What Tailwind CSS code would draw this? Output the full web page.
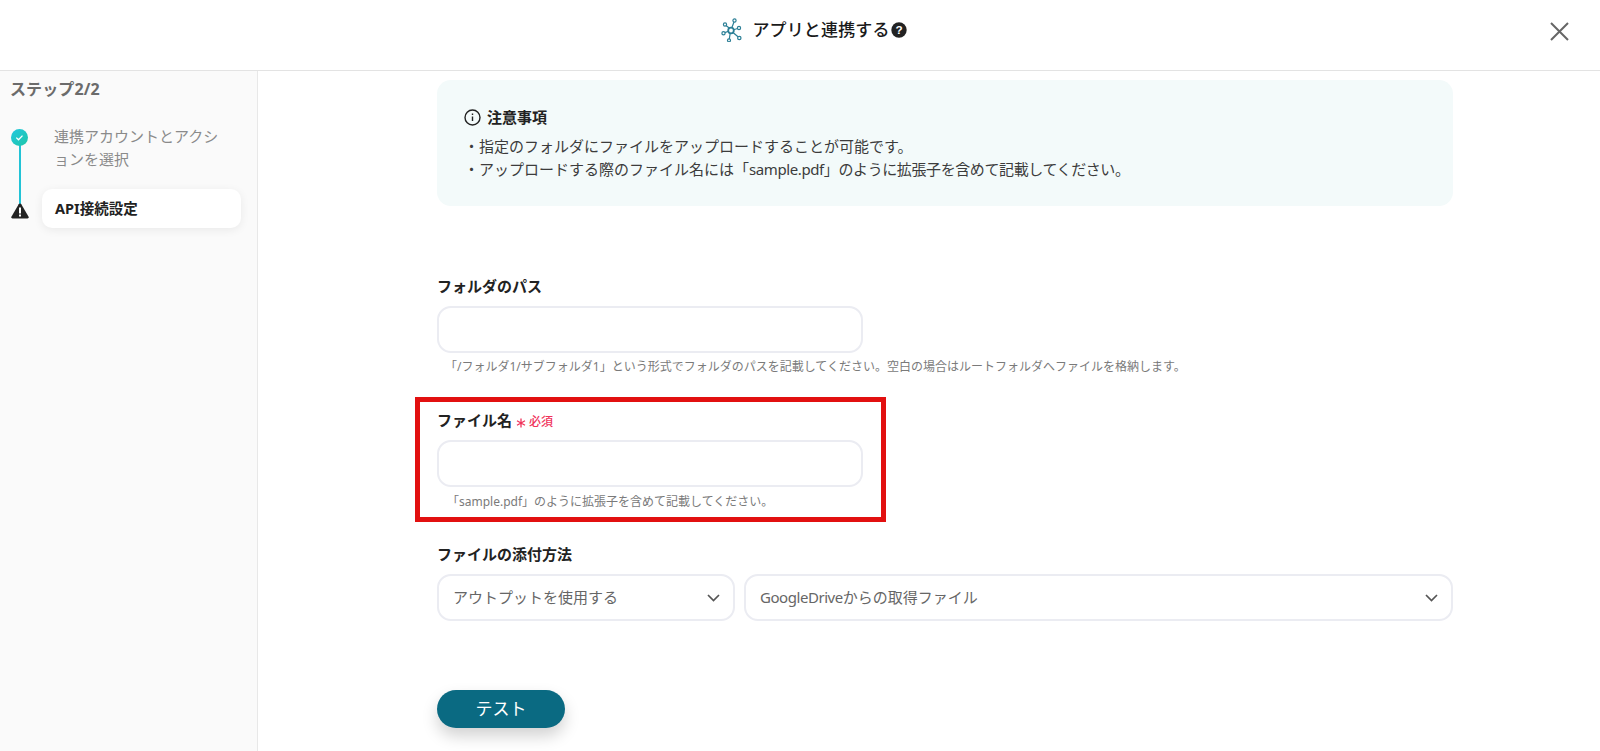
<!DOCTYPE html>
<html lang="ja">
<head>
<meta charset="utf-8">
<script src="https://cdn.jsdelivr.net/npm/@tailwindcss/browser@4"></script>
</head>
<body class="bg-white overflow-hidden font-['Noto_Sans','Noto_Sans_CJK_JP',sans-serif]">
<div class="h-[751px] w-[1600px] flex flex-col overflow-hidden">
  <header class="h-[71px] shrink-0 border-b border-[#e3e3e3] flex items-center justify-center relative">
    <div class="flex items-center ml-[27px] mt-[-10px]">
      <svg class="w-[22px] h-[24px] mr-[10px]" viewBox="0 0 22 24" fill="none" stroke="#2c7f96" stroke-width="1.2">
        <circle cx="11" cy="12.500" r="2.800" stroke-width="1.800"/>
        <path d="M9.500 10.200 6 7.500M11.800 9.800 14 4M13.700 11.800l3.800-1.300M13 14.500l5 4.300M10.200 15.200 9.300 21M8.300 13.300 5 14.600"/>
        <circle cx="5" cy="6.500" r="1.600"/><circle cx="14.500" cy="2.500" r="1.600"/><circle cx="19" cy="10" r="1.600"/><circle cx="19.300" cy="20" r="1.700"/><circle cx="9" cy="22.300" r="1.500"/><circle cx="3.500" cy="15.200" r="1.600"/>
      </svg>
      <span class="text-[17px] tracking-[0.15px] font-medium text-[#1a1a1a] leading-6">アプリと連携する</span>
      <svg class="w-[16px] h-[16px] ml-[1px]" viewBox="0 0 15 15"><circle cx="7.5" cy="7.5" r="7.200" fill="#222"/><text x="7.5" y="11.3" text-anchor="middle" font-size="11" font-weight="700" fill="#fff" font-family="Liberation Sans">?</text></svg>
    </div>
    <svg class="absolute left-[1550px] top-[22px] w-[19px] h-[19px]" viewBox="0 0 19 19" stroke="#666" stroke-width="2" fill="none"><path d="M1 1l17 17M18 1 1 18"/></svg>
  </header>
  <div class="flex flex-1 min-h-0">
    <aside class="w-[258px] shrink-0 bg-[#fafafa] border-r border-[#e8e8e8] pl-[11px] pt-[6px]">
      <div class="text-[16px] tracking-[0.1px] font-bold text-[#6b6b6b] leading-6 ml-[-1px]">ステップ2/2</div>
      <div class="relative mt-[27px]">
        <div class="absolute left-[8px] top-[10px] w-[2px] h-[67px] bg-[#22c3d6]"></div>
        <div class="flex">
          <svg class="w-[17px] h-[17px] mt-[1px] relative shrink-0" viewBox="0 0 17 17"><defs><linearGradient id="g" x1="0" y1="0" x2="1" y2="1"><stop offset="0" stop-color="#22c8df"/><stop offset="1" stop-color="#1fc6a8"/></linearGradient></defs><circle cx="8.5" cy="8.5" r="8.5" fill="url(#g)"/><path d="M5.3 8.6l2.2 2.2 4-4.2" stroke="#fff" stroke-width="1.3" fill="none"/></svg>
          <div class="ml-[26px] w-[180px] text-[15px] leading-[23px] text-[#8a8a8a] mt-[-3px]">連携アカウントとアクシ<br>ョンを選択</div>
        </div>
        <div class="flex items-center mt-[18px]">
          <svg class="w-[18px] h-[16px] relative shrink-0 mt-[5px]" viewBox="0 0 18 16"><path d="M9 .5c.6 0 1 .3 1.3.8l7.3 12.4c.5.9-.1 1.8-1.100 1.800H1.500c-1 0-1.600-.9-1.100-1.800L7.700 1.300C8 .8 8.400.5 9 .5z" fill="#222"/><rect x="8" y="4.500" width="2" height="6" fill="#fff"/><rect x="8" y="11.500" width="2" height="2" fill="#fff"/></svg>
          <div class="ml-[13px] w-[199px] h-[39px] bg-white rounded-[10px] shadow-[0_2px_10px_rgba(0,0,0,0.07)] flex items-center pl-[13px] text-[14.500px] font-bold text-[#222]">API接続設定</div>
        </div>
      </div>
    </aside>
    <main class="flex-1 pl-[179px] pt-[9px]">
      <div class="w-[1016px] relative">
        <section class="h-[126px] rounded-[14px] bg-[#f3fafa] pl-[27px] pt-[25px]">
          <div class="flex items-center text-[15px] font-bold text-[#222] leading-6">
            <svg class="w-[17px] h-[17px] mr-[6px]" viewBox="0 0 17 17" fill="none" stroke="#222" stroke-width="1.4"><circle cx="8.500" cy="8.500" r="7.500"/><path d="M8.500 7.500v4.500M8.500 4.500v1.500"/></svg>
            注意事項
          </div>
          <div class="text-[15px] leading-[23px] text-[#3c3c3c] mt-[6px]">
            <p>・指定のフォルダにファイルをアップロードすることが可能です。</p>
            <p>・アップロードする際のファイル名には「<span class="tracking-[-0.4px]">sample.pdf」のように拡張子を含めて記載してください。</span></p>
          </div>
        </section>
        <label class="block mt-[68px] text-[15px] font-bold text-[#222] leading-6">フォルダのパス</label>
        <input class="block mt-[8px] w-[426px] h-[47px] rounded-[14px] border-2 border-[#ebecf2] bg-white">
        <p class="mt-[4px] ml-[8px] text-[12px] leading-5 text-[#7a7a7a]">「/フォルダ1/サブフォルダ1」という形式でフォルダのパスを記載してください。空白の場合はルートフォルダへファイルを格納します。</p>
        <div class="flex items-center h-6 mt-[31px]">
          <label class="text-[15px] font-bold text-[#222]">ファイル名</label>
          <svg class="w-[10px] h-[10px] ml-[4px] mt-[5px]" viewBox="0 0 10 10" stroke="#f0325a" stroke-width="1.300" fill="none"><path d="M5 .5v9M1 2.700l8 4.600M9 2.700 1 7.300"/></svg>
          <span class="text-[#f0325a] text-[12px] font-medium ml-[3px] leading-6 mt-[3px]">必須</span>
        </div>
        <input class="block mt-[8px] w-[426px] h-[47px] rounded-[14px] border-2 border-[#ebecf2] bg-white">
        <p class="mt-[5px] ml-[10px] text-[12px] leading-5 text-[#7a7a7a]">「sample.pdf」のように拡張子を含めて記載してください。</p>
        <label class="block mt-[30px] text-[15px] font-bold text-[#222] leading-6">ファイルの添付方法</label>
        <div class="flex gap-[9px] mt-[8px]">
          <div class="w-[298px] h-[47px] rounded-[14px] border-2 border-[#ebecf2] flex items-center justify-between pl-[14px] pr-[13px] text-[15px] text-[#666]">
            <span>アウトプットを使用する</span>
            <svg class="w-[13px] h-[8px]" viewBox="0 0 13 8" fill="none" stroke="#555" stroke-width="1.700"><path d="M1 1l5.500 5.500L12 1"/></svg>
          </div>
          <div class="flex-1 h-[47px] rounded-[14px] border-2 border-[#ebecf2] flex items-center justify-between pl-[14px] pr-[13px] text-[15px] text-[#666]">
            <span><span class="tracking-[-0.45px]">GoogleDrive</span>からの取得ファイル</span>
            <svg class="w-[13px] h-[8px]" viewBox="0 0 13 8" fill="none" stroke="#555" stroke-width="1.700"><path d="M1 1l5.500 5.500L12 1"/></svg>
          </div>
        </div>
        <button class="block mt-[69px] w-[128px] h-[38px] rounded-full bg-[#0a6a82] text-white text-[17px] shadow-[0_8px_16px_rgba(0,0,0,0.18)]">テスト</button>
        <div class="absolute left-[-22px] top-[317px] w-[471px] h-[125px] border-[5px] border-[#e21010] pointer-events-none"></div>
      </div>
    </main>
  </div>
</div>
</body>
</html>
